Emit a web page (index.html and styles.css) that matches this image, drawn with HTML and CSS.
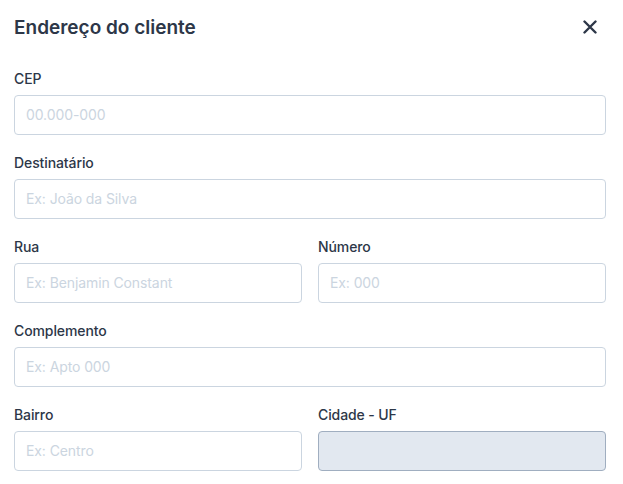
FILE: index.html
```html
<!DOCTYPE html>
<html lang="pt-BR">
<head>
<meta charset="utf-8">
<link rel="stylesheet" href="styles.css">
</head>
<body>
<div class="modal">
  <header class="header">
    <h1 class="title">Endereço do cliente</h1>
    <button class="close" aria-label="Fechar">
      <svg width="14" height="14" viewBox="0 0 14 14"><path d="M1.5 1.5L12.5 12.5M12.5 1.5L1.5 12.5" stroke="#2d3748" stroke-width="2.4" stroke-linecap="round"/></svg>
    </button>
  </header>
  <form class="form">
    <div class="field">
      <label class="label">CEP</label>
      <input class="input" placeholder="00.000-000">
    </div>
    <div class="field">
      <label class="label">Destinatário</label>
      <input class="input" placeholder="Ex: João da Silva">
    </div>
    <div class="row">
      <div class="field">
        <label class="label">Rua</label>
        <input class="input" placeholder="Ex: Benjamin Constant">
      </div>
      <div class="field">
        <label class="label">Número</label>
        <input class="input" placeholder="Ex: 000">
      </div>
    </div>
    <div class="field">
      <label class="label">Complemento</label>
      <input class="input" placeholder="Ex: Apto 000">
    </div>
    <div class="row">
      <div class="field">
        <label class="label">Bairro</label>
        <input class="input" placeholder="Ex: Centro">
      </div>
      <div class="field">
        <label class="label">Cidade - UF</label>
        <input class="input input-disabled" disabled>
      </div>
    </div>
  </form>
</div>
</body>
</html>
```
FILE: styles.css
```css
* { box-sizing: border-box; }
html, body { margin: 0; padding: 0; background: #fff; }
body { font-family: Inter, "Liberation Sans", sans-serif; color: #2d3748; }
.modal { width: 623px; padding: 0 17px 0 14px; }
.header { display: flex; align-items: center; justify-content: space-between; height: 54px; }
.title { margin: 0; font-size: 19px; font-weight: 600; color: #2d3748; letter-spacing: 0; }
.close { border: 0; background: none; padding: 0; width: 28px; height: 28px; display: flex; align-items: center; justify-content: center; margin-right: 2px; }
.form { display: flex; flex-direction: column; gap: 18px; padding-top: 15px; }
.row { display: grid; grid-template-columns: 1fr 1fr; gap: 16px; }
.field { display: flex; flex-direction: column; }
.label { font-size: 14px; line-height: 20px; margin-bottom: 6px; color: #2d3748; font-weight: 500; letter-spacing: -0.1px; }
.input { height: 40px; border: 1px solid #cbd5e0; border-radius: 4px; padding: 0 11px 1px; font-family: inherit; font-size: 14px; color: #2d3748; background: #fff; outline: none; letter-spacing: -0.1px; }
.input::placeholder { color: #cbd5e0; }
.input-disabled { background: #e2e8f0; border-color: #a0aec0; }
```
